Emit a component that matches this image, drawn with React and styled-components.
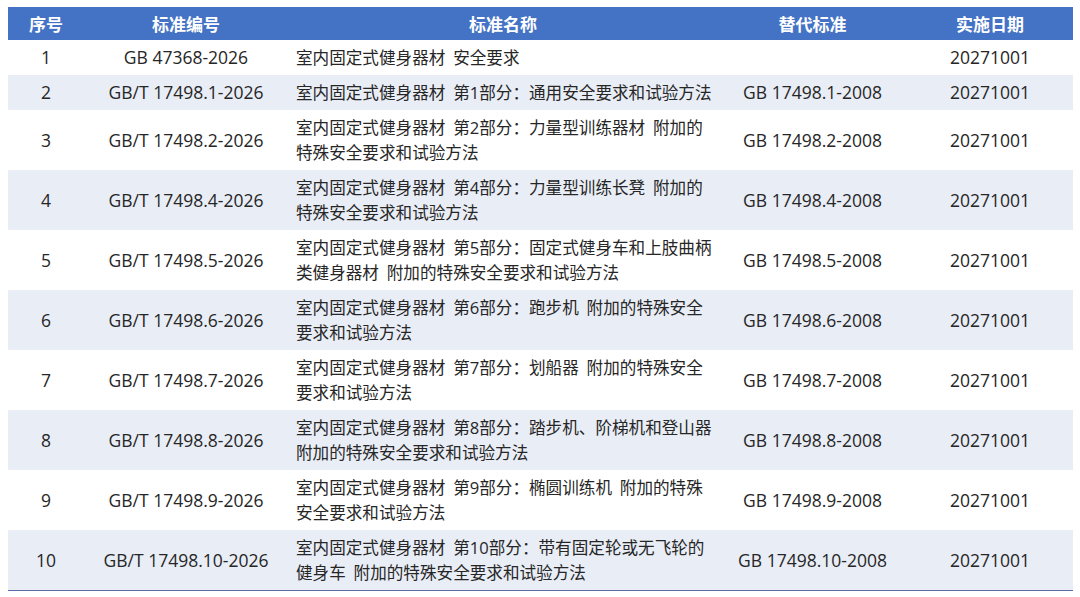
import React from "react";
import styled, { createGlobalStyle } from "styled-components";

const rows = [
  { no: "1", code: "GB 47368-2026", name: ["室内固定式健身器材 安全要求"], old: "", date: "20271001" },
  { no: "2", code: "GB/T 17498.1-2026", name: ["室内固定式健身器材 第1部分：通用安全要求和试验方法"], old: "GB 17498.1-2008", date: "20271001" },
  { no: "3", code: "GB/T 17498.2-2026", name: ["室内固定式健身器材 第2部分：力量型训练器材 附加的", "特殊安全要求和试验方法"], old: "GB 17498.2-2008", date: "20271001" },
  { no: "4", code: "GB/T 17498.4-2026", name: ["室内固定式健身器材 第4部分：力量型训练长凳 附加的", "特殊安全要求和试验方法"], old: "GB 17498.4-2008", date: "20271001" },
  { no: "5", code: "GB/T 17498.5-2026", name: ["室内固定式健身器材 第5部分：固定式健身车和上肢曲柄", "类健身器材 附加的特殊安全要求和试验方法"], old: "GB 17498.5-2008", date: "20271001" },
  { no: "6", code: "GB/T 17498.6-2026", name: ["室内固定式健身器材 第6部分：跑步机 附加的特殊安全", "要求和试验方法"], old: "GB 17498.6-2008", date: "20271001" },
  { no: "7", code: "GB/T 17498.7-2026", name: ["室内固定式健身器材 第7部分：划船器 附加的特殊安全", "要求和试验方法"], old: "GB 17498.7-2008", date: "20271001" },
  { no: "8", code: "GB/T 17498.8-2026", name: ["室内固定式健身器材 第8部分：踏步机、阶梯机和登山器", "附加的特殊安全要求和试验方法"], old: "GB 17498.8-2008", date: "20271001" },
  { no: "9", code: "GB/T 17498.9-2026", name: ["室内固定式健身器材 第9部分：椭圆训练机 附加的特殊", "安全要求和试验方法"], old: "GB 17498.9-2008", date: "20271001" },
  { no: "10", code: "GB/T 17498.10-2026", name: ["室内固定式健身器材 第10部分：带有固定轮或无飞轮的", "健身车 附加的特殊安全要求和试验方法"], old: "GB 17498.10-2008", date: "20271001" },
];

const GlobalStyle = createGlobalStyle`
  body {
    margin: 0;
    background: #ffffff;
    font-family: "Open Sans", "Noto Sans CJK SC", sans-serif;
  }
`;

const Page = styled.div`
  padding: 7px 7px 8px 8px;
`;

const Table = styled.table`
  width: 1065px;
  border-collapse: collapse;
  table-layout: fixed;
  border-bottom: 1px solid #5a6da6;
`;

const HeadCell = styled.th`
  height: 33px;
  padding: 0;
  background: #4472c4;
  color: #ffffff;
  font-family: "Noto Sans CJK SC", sans-serif;
  font-size: 17px;
  font-weight: 700;
  text-align: center;
`;

const Row = styled.tr`
  background: ${(p) => (p.$shaded ? "#e9edf6" : "#ffffff")};
`;

const Cell = styled.td`
  padding: 5px 8px;
  color: #262626;
  font-size: ${(p) => (p.$left ? "16.6px" : "17.5px")};
  line-height: 25px;
  text-align: ${(p) => (p.$left ? "left" : "center")};
  vertical-align: middle;
  white-space: nowrap;
`;

const NameLine = styled.div`
  word-spacing: 3.5px;
`;

const App = () => {
  return (
    <Page>
      <GlobalStyle />
      <Table>
        <colgroup>
          <col style={{ width: 76 }} />
          <col style={{ width: 204 }} />
          <col style={{ width: 430 }} />
          <col style={{ width: 189 }} />
          <col style={{ width: 166 }} />
        </colgroup>
        <thead>
          <tr>
            <HeadCell>序号</HeadCell>
            <HeadCell>标准编号</HeadCell>
            <HeadCell>标准名称</HeadCell>
            <HeadCell>替代标准</HeadCell>
            <HeadCell>实施日期</HeadCell>
          </tr>
        </thead>
        <tbody>
          {rows.map((row, i) => (
            <Row key={row.no} $shaded={i % 2 === 1}>
              <Cell>{row.no}</Cell>
              <Cell>{row.code}</Cell>
              <Cell $left>
                {row.name.map((line) => (
                  <NameLine key={line}>{line}</NameLine>
                ))}
              </Cell>
              <Cell>{row.old}</Cell>
              <Cell>{row.date}</Cell>
            </Row>
          ))}
        </tbody>
      </Table>
    </Page>
  );
};

export default App;
